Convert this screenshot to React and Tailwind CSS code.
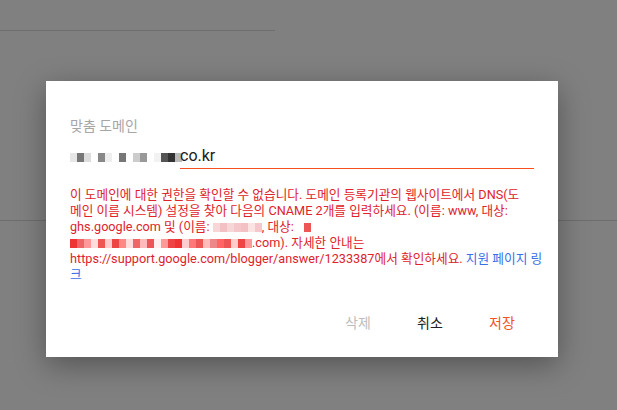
const mosaic = (cells) => (
  <span className="inline-flex align-middle">
    {cells.map((c, i) => (
      <span key={i} className="inline-block h-[9px] w-[7px]" style={{ background: c }} />
    ))}
  </span>
);

const DomainDialog = () => {
  return (
    <div className="absolute left-[46px] top-[81px] w-[512px] h-[276px] bg-white shadow-[0_8px_28px_rgba(0,0,0,0.35)] flex flex-col px-6 pt-[37px]">
      <label className="text-[14px] leading-4 text-[#a6a6a6]">맞춤 도메인</label>
      <div className="mt-[11px] flex items-end h-[24px]">
        <div className="w-[110px] h-full flex items-center">
          {mosaic(["#e6e6e6", "#777", "#ddd", "#fff", "#888", "#eee", "#fff", "#777", "#fff", "#ccc", "#999", "#fff", "#f2f2f2", "#555", "#333", "#bbb", "#fff"])}
        </div>
        <div className="flex-1 h-full border-b border-[#f4511e] text-[16px] leading-[22px] text-[#212121]">
          co.kr
        </div>
      </div>
      <p className="mt-[18px] text-[12.7px] leading-4 text-[#e0232b] whitespace-nowrap">
        이 도메인에 대한 권한을 확인할 수 없습니다. 도메인 등록기관의 웹사이트에서 DNS(도
        <br />
        메인 이름 시스템) 설정을 찾아 다음의 CNAME 2개를 입력하세요. (이름: www, 대상:
        <br />
        ghs.google.com 및 (이름: {mosaic(["#f8d6d8", "#f3c0c3", "#f8d6d8", "#f6c7ca", "#f3c0c3", "#fbe3e4", "#f6c7ca"])}, 대상: {mosaic(["#fff", "#e55", "#fff"])}
        <br />
        {mosaic(["#e33", "#e66", "#f99", "#fdd", "#e55", "#fcc", "#e44", "#f88", "#fdd", "#e66", "#fbb", "#e55", "#fee", "#f99", "#e44", "#e33", "#fcc", "#f77", "#e55", "#fbb", "#e88", "#f66", "#e55", "#fcc", "#e44", "#f99"])}.com). 자세한 안내는
        <br />
        https://support.google.com/blogger/answer/1233387에서 확인하세요.{" "}
        <span className="text-[#3a6ee8]">지원 페이지 링</span>
        <br />
        <span className="text-[#3a6ee8]">크</span>
      </p>
      <div className="mt-auto mb-[24px] flex justify-end gap-2 text-[14px] leading-5">
        <button className="w-[64px] text-center text-[#bdbdbd]">삭제</button>
        <button className="w-[64px] text-center text-[#212121]">취소</button>
        <button className="w-[64px] text-center text-[#f4511e]">저장</button>
      </div>
    </div>
  );
};

export default function App() {
  return (
    <div
      className="relative w-[617px] h-[410px] overflow-hidden bg-[#808080]"
      style={{ fontFamily: "Roboto, 'Noto Sans CJK KR', sans-serif" }}
    >
      <div className="h-[30px]" />
      <div className="w-[275px] h-px bg-[#6e6e6e]" />
      <div className="h-[189px]" />
      <div className="w-full h-px bg-[#6e6e6e]" />
      <DomainDialog />
    </div>
  );
}
